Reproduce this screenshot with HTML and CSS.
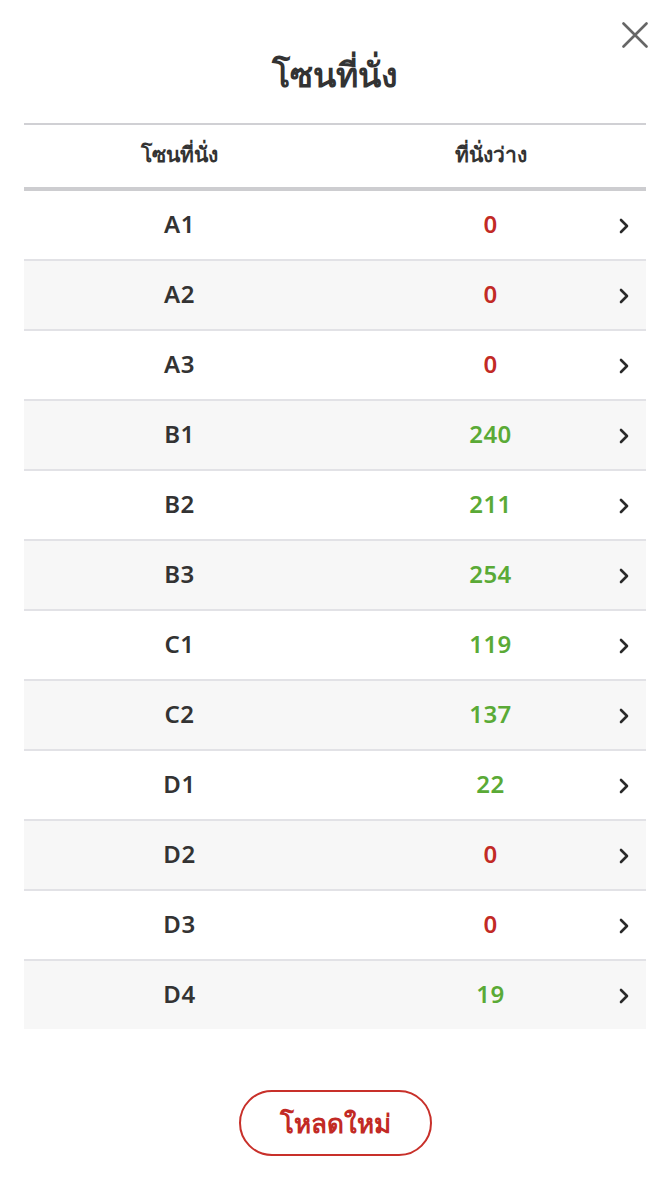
FILE: index.html
```html
<!DOCTYPE html>
<html lang="th">
<head>
<meta charset="utf-8">
<link rel="stylesheet" href="styles.css">
</head>
<body>
<div class="modal">
  <button class="close" aria-label="close">
    <svg viewBox="0 0 26 26" width="26" height="26"><path d="M1.5 1.5 L24.5 24.5 M24.5 1.5 L1.5 24.5" stroke="#666" stroke-width="2.6" stroke-linecap="round" fill="none"/></svg>
  </button>
  <h1 class="title">โซนที่นั่ง</h1>
  <div class="table">
    <div class="thead">
      <div class="th">โซนที่นั่ง</div>
      <div class="th">ที่นั่งว่าง</div>
    </div>
    <div class="tbody">
      <div class="row"><div class="zone">A1</div><div class="seats red">0</div><svg class="chev" viewBox="0 0 10 16"><path d="M2 2 L8 8 L2 14"/></svg></div>
      <div class="row"><div class="zone">A2</div><div class="seats red">0</div><svg class="chev" viewBox="0 0 10 16"><path d="M2 2 L8 8 L2 14"/></svg></div>
      <div class="row"><div class="zone">A3</div><div class="seats red">0</div><svg class="chev" viewBox="0 0 10 16"><path d="M2 2 L8 8 L2 14"/></svg></div>
      <div class="row"><div class="zone">B1</div><div class="seats green">240</div><svg class="chev" viewBox="0 0 10 16"><path d="M2 2 L8 8 L2 14"/></svg></div>
      <div class="row"><div class="zone">B2</div><div class="seats green">211</div><svg class="chev" viewBox="0 0 10 16"><path d="M2 2 L8 8 L2 14"/></svg></div>
      <div class="row"><div class="zone">B3</div><div class="seats green">254</div><svg class="chev" viewBox="0 0 10 16"><path d="M2 2 L8 8 L2 14"/></svg></div>
      <div class="row"><div class="zone">C1</div><div class="seats green">119</div><svg class="chev" viewBox="0 0 10 16"><path d="M2 2 L8 8 L2 14"/></svg></div>
      <div class="row"><div class="zone">C2</div><div class="seats green">137</div><svg class="chev" viewBox="0 0 10 16"><path d="M2 2 L8 8 L2 14"/></svg></div>
      <div class="row"><div class="zone">D1</div><div class="seats green">22</div><svg class="chev" viewBox="0 0 10 16"><path d="M2 2 L8 8 L2 14"/></svg></div>
      <div class="row"><div class="zone">D2</div><div class="seats red">0</div><svg class="chev" viewBox="0 0 10 16"><path d="M2 2 L8 8 L2 14"/></svg></div>
      <div class="row"><div class="zone">D3</div><div class="seats red">0</div><svg class="chev" viewBox="0 0 10 16"><path d="M2 2 L8 8 L2 14"/></svg></div>
      <div class="row"><div class="zone">D4</div><div class="seats green">19</div><svg class="chev" viewBox="0 0 10 16"><path d="M2 2 L8 8 L2 14"/></svg></div>
    </div>
  </div>
  <div class="actions">
    <button class="reload">โหลดใหม่</button>
  </div>
</div>
</body>
</html>
```
FILE: styles.css
```css
* { box-sizing: border-box; }
html, body { margin: 0; padding: 0; background: #fff; }
body {
  font-family: "Noto Sans", "Open Sans", sans-serif;
  color: #333;
  width: 670px;
  height: 1200px;
  overflow: hidden;
}
.modal {
  position: relative;
  padding: 50px 24px 0 24px;
}
.close {
  position: absolute;
  top: 22px;
  right: 22px;
  width: 26px;
  height: 26px;
  padding: 0;
  border: 0;
  background: none;
  line-height: 0;
}
.title {
  margin: 0 0 25px 0;
  height: 48px;
  line-height: 48px;
  font-size: 34px;
  font-weight: 700;
  text-align: center;
  color: #333;
}
.table {
  border-top: 2px solid #d0d0d4;
}
.thead {
  display: grid;
  grid-template-columns: 1fr 1fr;
  height: 66px;
  align-items: center;
  border-bottom: 4px solid #cdcdd0;
  padding-bottom: 4px;
}
.th {
  text-align: center;
  font-size: 21px;
  font-weight: 600;
  color: #333;
}
.row {
  position: relative;
  display: grid;
  grid-template-columns: 1fr 1fr;
  align-items: center;
  height: 70px;
  border-bottom: 2px solid #e2e2e6;
  padding-bottom: 3px;
}
.row:nth-child(even) { background: #f7f7f7; }
.row:last-child { border-bottom: 0; height: 68px; }
.zone, .seats {
  text-align: center;
  font-size: 24px;
  font-weight: 600;
  letter-spacing: 0.5px;
}
.zone { color: #333; }
.red { color: #c22a25; }
.green { color: #5aaa36; }
.chev {
  position: absolute;
  right: 17px;
  top: 27px;
  width: 10px;
  height: 16px;
  fill: none;
  stroke: #2a2a2a;
  stroke-width: 2.6;
  stroke-linecap: round;
  stroke-linejoin: round;
}
.actions {
  display: flex;
  justify-content: center;
  padding-top: 61px;
}
.reload {
  width: 193px;
  height: 66px;
  border: 2.5px solid #c8302a;
  border-radius: 33px;
  background: #fff;
  color: #c22a25;
  font-family: "Noto Sans", "Open Sans", sans-serif;
  font-size: 26px;
  font-weight: 700;
  padding: 0;
}
```
